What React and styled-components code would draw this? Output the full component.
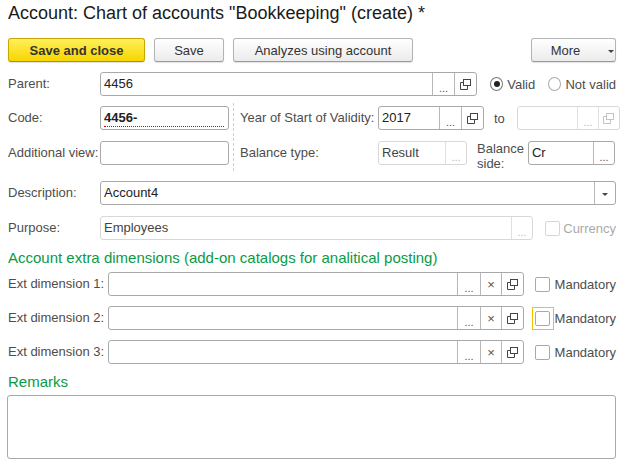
import styled, { createGlobalStyle } from 'styled-components';

const Global = createGlobalStyle`
  body {
    margin: 0;
    background: #fff;
    font-family: Arial, "Liberation Sans", sans-serif;
    font-size: 13px;
    color: #4d4d4d;
  }
`;

const Page = styled.div`
  width: 629px;
  height: 469px;
  padding: 0 13px 0 8px;
  box-sizing: border-box;
  overflow: hidden;
`;

const Title = styled.h1`
  margin: 0;
  padding-top: 2px;
  height: 36px;
  font-size: 18px;
  font-weight: normal;
  line-height: 22px;
  color: #1a1a1a;
`;

const Toolbar = styled.div`
  display: flex;
  align-items: center;
  gap: 9px;
  height: 24px;
`;

const Button = styled.div`
  display: flex;
  align-items: center;
  justify-content: center;
  gap: ${(p) => (p.$menu ? '28px' : '0')};
  box-sizing: border-box;
  width: ${(p) => p.$w}px;
  height: 24px;
  margin-left: ${(p) => (p.$push ? 'auto' : '0')};
  border: 1px solid ${(p) => (p.$primary ? '#c9a600' : '#b4b4b4')};
  border-bottom-color: ${(p) => (p.$primary ? '#b08f00' : '#9a9a9a')};
  border-radius: 3px;
  background: ${(p) =>
    p.$primary
      ? 'linear-gradient(#ffef5a, #f7d600)'
      : 'linear-gradient(#ffffff, #ebebeb)'};
  font-size: 13px;
  font-weight: ${(p) => (p.$primary ? 'bold' : 'normal')};
  color: #333;
  box-shadow: 0 1px 1px rgba(0, 0, 0, 0.12);
`;

const Caret = styled.span`
  width: 0;
  height: 0;
  border-left: 3px solid transparent;
  border-right: 3px solid transparent;
  border-top: 3px solid #444;
  margin-top: 2px;
`;

const Row = styled.div`
  display: flex;
  align-items: center;
  height: 24px;
  margin-top: ${(p) => p.$mt ?? 11}px;
`;

const Label = styled.div`
  width: ${(p) => p.$w ?? 92}px;
  flex: none;
  color: #4d4d4d;
  white-space: nowrap;
  line-height: 24px;
`;

const Field = styled.div`
  display: flex;
  box-sizing: border-box;
  width: ${(p) => p.$w}px;
  height: 24px;
  flex: none;
  border: 1px solid ${(p) => (p.$off ? '#d8d8d8' : '#a9a9a9')};
  border-radius: 3px;
  background: #fff;
`;

const Value = styled.div`
  flex: 1;
  padding: 0 3px;
  line-height: 22px;
  font-size: 13px;
  color: ${(p) => (p.$off ? '#444' : '#222')};
  font-weight: ${(p) => (p.$bold ? 'bold' : 'normal')};
  white-space: nowrap;
  overflow: hidden;
`;

const CodeText = styled.span`
  display: inline-block;
  line-height: 16px;
  border-bottom: 1px dotted #d00;
  width: 120px;
  margin-top: 2px;
`;

const Cell = styled.div`
  display: flex;
  align-items: center;
  justify-content: center;
  width: ${(p) => p.$w ?? 21}px;
  flex: none;
  border-left: 1px solid ${(p) => (p.$off ? '#e0e0e0' : '#b8b8b8')};
  color: ${(p) => (p.$off ? '#bbb' : '#555')};
  font-size: 11px;
`;

const Dots = styled.span`
  font-size: 11px;
  line-height: 1;
  margin-top: 8px;
`;

const Split = styled.div`
  display: flex;
  margin-top: 10px;
`;

const Column = styled.div`
  display: flex;
  flex-direction: column;
  gap: 11px;
`;

const Divider = styled.div`
  width: 0;
  margin: -3px 6px -6px 4px;
  height: 68px;
  border-left: 1px dashed #cfcfcf;
`;

const Inline = styled.div`
  display: flex;
  align-items: center;
  height: 24px;
`;

const Text = styled.span`
  margin: 0 ${(p) => p.$mr ?? 0}px 0 ${(p) => p.$ml ?? 0}px;
  color: ${(p) => (p.$off ? '#aaa' : '#4d4d4d')};
  white-space: nowrap;
`;

const TwoLine = styled.div`
  align-self: flex-start;
  margin: 0 4px 0 10px;
  line-height: 15px;
  color: #4d4d4d;
`;

const Radio = styled.span`
  box-sizing: border-box;
  width: 14px;
  height: 14px;
  border-radius: 50%;
  border: 1px solid ${(p) => (p.$on ? '#777' : '#aaa')};
  display: flex;
  align-items: center;
  justify-content: center;
  margin: 0 4px 0 ${(p) => p.$ml ?? 0}px;
  &::after {
    content: '';
    width: 6px;
    height: 6px;
    border-radius: 50%;
    background: ${(p) => (p.$on ? '#222' : 'transparent')};
  }
`;

const Check = styled.span`
  box-sizing: border-box;
  width: 15px;
  height: 15px;
  border: 1px solid ${(p) => (p.$off ? '#d6d6d6' : '#a9a9a9')};
  border-radius: 2px;
  background: #fff;
`;

const Focus = styled.span`
  display: flex;
  align-items: center;
  justify-content: center;
  box-sizing: border-box;
  width: 23px;
  height: 23px;
  border: 1px solid ${(p) => (p.$on ? '#f2c400' : 'transparent')};
  margin: 0 1px 0 ${(p) => p.$ml ?? 8}px;
`;

const Section = styled.div`
  margin-top: ${(p) => p.$mt}px;
  font-size: 15px;
  line-height: 18px;
  color: #0a9a45;
`;

const Memo = styled.div`
  box-sizing: border-box;
  margin: 4px 0 0 -1px;
  width: 609px;
  height: 64px;
  border: 1px solid #a9a9a9;
  border-radius: 3px;
`;

const CopyIcon = ({ off }) => (
  <svg width="11" height="11" viewBox="0 0 11 11">
    <g fill="none" stroke={off ? '#c4c4c4' : '#444'} strokeWidth="1">
      <rect x="3.5" y="0.5" width="7" height="6" />
      <path d="M3.5 3.5H0.5V10.5H7.5V6.5" />
    </g>
  </svg>
);

const DotsCell = ({ off, w }) => (
  <Cell $off={off} $w={w}>
    <Dots>...</Dots>
  </Cell>
);

const ExtRow = ({ n, mt, focus }) => (
  <Row $mt={mt}>
    <Label $w={100}>Ext dimension {n}:</Label>
    <Field $w={416}>
      <Value />
      <DotsCell w={22} />
      <Cell $w={20}>
        <span style={{ fontSize: 13 }}>×</span>
      </Cell>
      <Cell $w={21}>
        <CopyIcon />
      </Cell>
    </Field>
    <Focus $on={focus}>
      <Check />
    </Focus>
    <Text>Mandatory</Text>
  </Row>
);

export default function App() {
  return (
    <Page>
      <Global />
      <Title>Account: Chart of accounts "Bookkeeping" (create) *</Title>
      <Toolbar>
        <Button $primary $w={137}>Save and close</Button>
        <Button $w={70}>Save</Button>
        <Button $w={180}>Analyzes using account</Button>
        <Button $w={85} $push $menu>
          <span style={{ marginLeft: 18 }}>More</span>
          <Caret />
        </Button>
      </Toolbar>

      <Row $mt={10}>
        <Label>Parent:</Label>
        <Field $w={377}>
          <Value>4456</Value>
          <DotsCell />
          <Cell>
            <CopyIcon />
          </Cell>
        </Field>
        <Radio $on $ml={13} />
        <Text $mr={13}>Valid</Text>
        <Radio />
        <Text>Not valid</Text>
      </Row>

      <Split>
        <Column>
          <Inline>
            <Label>Code:</Label>
            <Field $w={129}>
              <Value $bold>
                <CodeText>4456-</CodeText>
              </Value>
            </Field>
          </Inline>
          <Inline>
            <Label>Additional view:</Label>
            <Field $w={129} />
          </Inline>
        </Column>
        <Divider />
        <Column>
          <Inline>
            <Label $w={138}>Year of Start of Validity:</Label>
            <Field $w={106}>
              <Value>2017</Value>
              <DotsCell />
              <Cell>
                <CopyIcon />
              </Cell>
            </Field>
            <Text $ml={10} $mr={12}>to</Text>
            <Field $w={103} $off>
              <Value />
              <DotsCell off w={20} />
              <Cell $off $w={20}>
                <CopyIcon off />
              </Cell>
            </Field>
          </Inline>
          <Inline>
            <Label $w={138}>Balance type:</Label>
            <Field $w={89} $off>
              <Value $off>Result</Value>
              <DotsCell off w={20} />
            </Field>
            <TwoLine>
              Balance
              <br />
              side:
            </TwoLine>
            <Field $w={87}>
              <Value>Cr</Value>
              <DotsCell w={20} />
            </Field>
          </Inline>
        </Column>
      </Split>

      <Row $mt={16}>
        <Label>Description:</Label>
        <Field $w={516}>
          <Value>Account4</Value>
          <Cell $w={20}>
            <Caret />
          </Cell>
        </Field>
      </Row>

      <Row $mt={11}>
        <Label>Purpose:</Label>
        <Field $w={433} $off>
          <Value $off>Employees</Value>
          <DotsCell off w={20} />
        </Field>
        <Focus $ml={9}>
          <Check $off />
        </Focus>
        <Text $off>Currency</Text>
      </Row>

      <Section $mt={9}>Account extra dimensions (add-on catalogs for analitical posting)</Section>
      <ExtRow n={1} mt={5} />
      <ExtRow n={2} mt={10} focus />
      <ExtRow n={3} mt={10} />

      <Section $mt={9}>Remarks</Section>
      <Memo />
    </Page>
  );
}
